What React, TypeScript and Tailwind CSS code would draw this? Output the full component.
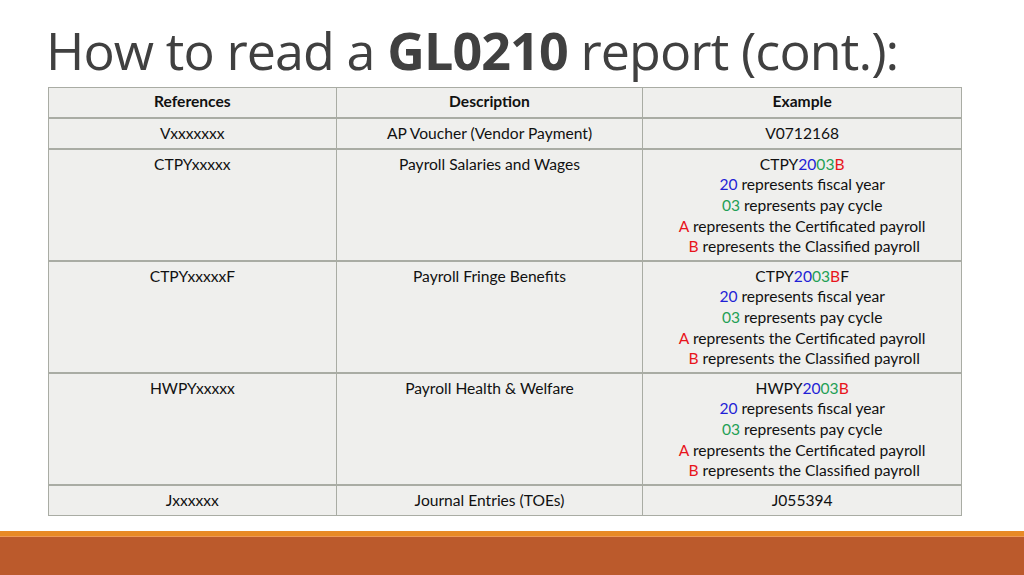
import React from 'react';

type Row = {
  ref: string;
  desc: string;
  example: React.ReactNode;
};

const Blue = ({ children }: { children: React.ReactNode }) => <span className="text-[#1f1fd6]">{children}</span>;
const Green = ({ children }: { children: React.ReactNode }) => <span className="text-[#1fa055]">{children}</span>;
const Red = ({ children }: { children: React.ReactNode }) => <span className="text-[#e8141c]">{children}</span>;

function Legend({ prefix, suffix }: { prefix: string; suffix?: string }) {
  return (
    <>
      <div>
        {prefix}
        <Blue>20</Blue>
        <Green>03</Green>
        <Red>B</Red>
        {suffix}
      </div>
      <div>
        <Blue>20</Blue> represents fiscal year
      </div>
      <div>
        <Green>03</Green> represents pay cycle
      </div>
      <div>
        <Red>A</Red> represents the Certificated payroll
      </div>
      <div>
        &nbsp;<Red>B</Red> represents the Classified payroll
      </div>
    </>
  );
}

const rows: Row[] = [
  { ref: 'Vxxxxxxx', desc: 'AP Voucher (Vendor Payment)', example: 'V0712168' },
  { ref: 'CTPYxxxxx', desc: 'Payroll Salaries and Wages', example: <Legend prefix="CTPY" /> },
  { ref: 'CTPYxxxxxF', desc: 'Payroll Fringe Benefits', example: <Legend prefix="CTPY" suffix="F" /> },
  { ref: 'HWPYxxxxx', desc: 'Payroll Health & Welfare', example: <Legend prefix="HWPY" /> },
  { ref: 'Jxxxxxx', desc: 'Journal Entries (TOEs)', example: 'J055394' },
];

export default function App() {
  return (
    <div className="w-[1024px] h-[575px] bg-white flex flex-col overflow-hidden">
      <h1
        className="pl-[46px] pt-[24px] h-[87px] text-[52px] leading-[52px] text-[#404040] tracking-[-0.9px]"
        style={{ fontFamily: '"Open Sans", sans-serif' }}
      >
        How to read a <span className="font-bold">GL0210</span> report (cont.):
      </h1>

      <div className="pl-[48px]" style={{ fontFamily: 'Lato, "Liberation Sans", sans-serif' }}>
        <table className="w-[914px] border-collapse text-[15.6px] text-[#111] text-center">
          <colgroup>
            <col className="w-[288px]" />
            <col className="w-[307px]" />
            <col className="w-[319px]" />
          </colgroup>
          <thead>
            <tr className="h-[30px] bg-[#efefed]">
              <th className="border border-[#a9aca4] font-bold pb-[1px]">References</th>
              <th className="border border-[#a9aca4] font-bold pb-[1px]">Description</th>
              <th className="border border-[#a9aca4] font-bold pb-[1px]">Example</th>
            </tr>
          </thead>
          <tbody>
            {rows.map((r) => {
              const tall = typeof r.example !== 'string';
              return (
                <tr key={r.ref} className={`${tall ? 'h-[112px]' : 'h-[31px]'} bg-[#efefed]`}>
                  <td className={`border border-[#a9aca4] border-t-2 ${tall ? 'align-top pt-[4px]' : 'align-middle'} leading-[20.7px]`}>
                    {r.ref}
                  </td>
                  <td className={`border border-[#a9aca4] border-t-2 ${tall ? 'align-top pt-[4px]' : 'align-middle'} leading-[20.7px]`}>
                    {r.desc}
                  </td>
                  <td className={`border border-[#a9aca4] border-t-2 ${tall ? 'align-top pt-[4px]' : 'align-middle'} leading-[20.7px]`}>
                    {r.example}
                  </td>
                </tr>
              );
            })}
          </tbody>
        </table>
      </div>

      <div className="mt-auto h-[44px] flex flex-col">
        <div className="h-[5px] bg-[#e88a26]" />
        <div className="h-[1px] bg-[#ef9a55]" />
        <div className="flex-1 bg-[#bb5a2c]" />
      </div>
    </div>
  );
}
